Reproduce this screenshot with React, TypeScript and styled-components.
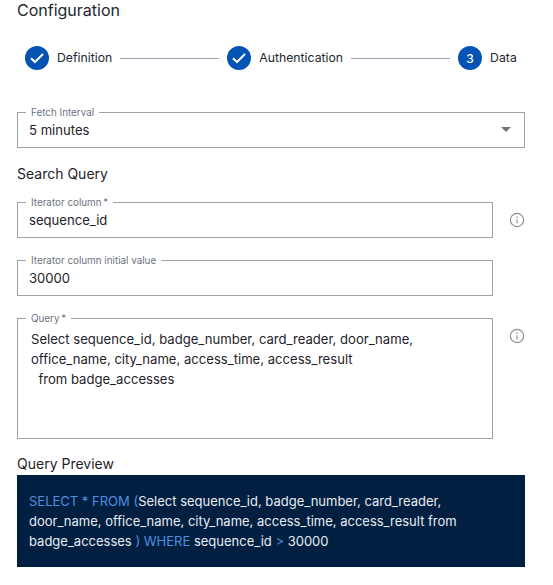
import React from "react";
import styled, { createGlobalStyle } from "styled-components";

const Global = createGlobalStyle`
  html, body { margin: 0; padding: 0; background: #fff; }
  body { font-family: Inter, "Liberation Sans", sans-serif; color: #1b1f26; }
`;

const Page = styled.div`
  width: 508px;
  height: 585px;
  padding: 0 28px 0 17px;
  overflow: hidden;
`;

const Title = styled.h1`
  margin: 0;
  height: 20px;
  font-size: 16px;
  line-height: 20px;
  font-weight: 400;
  color: #23272e;
`;

const Stepper = styled.ol`
  list-style: none;
  margin: 26px 0 0;
  padding: 0 8px;
  height: 24px;
  display: flex;
  align-items: center;
  gap: 8px;
`;

const StepCircle = styled.span`
  width: 24px;
  height: 24px;
  flex: none;
  border-radius: 50%;
  background: #0353b5;
  color: #fff;
  font-size: 12px;
  font-weight: 500;
  display: flex;
  align-items: center;
  justify-content: center;
`;

const StepLabel = styled.span`
  font-size: 12.25px;
  line-height: 24px;
  color: #23272e;
  white-space: nowrap;
`;

const StepLine = styled.span`
  flex: none;
  width: 99px;
  height: 1px;
  background: #9aa1b0;
`;

const Outlined = styled.div<{ $width: number; $height: number; $top: number }>`
  position: relative;
  box-sizing: border-box;
  width: ${(p) => p.$width}px;
  height: ${(p) => p.$height}px;
  margin-top: ${(p) => p.$top}px;
  border: 1px solid #a2a2a2;
  padding: 0 11px 1px;
  display: flex;
  align-items: center;
  justify-content: space-between;
  font-size: 13.1px;
  color: #1f2329;
`;

const FloatLabel = styled.label`
  position: absolute;
  top: -7px;
  left: 8px;
  padding: 0 5px;
  background: #fff;
  font-size: 9.85px;
  line-height: 12px;
  color: #6b7280;
  white-space: nowrap;
`;

const Caret = styled.span`
  width: 0;
  height: 0;
  border-left: 5px solid transparent;
  border-right: 5px solid transparent;
  border-top: 5px solid #757575;
  margin-right: 2px;
`;

const Heading = styled.h2<{ $top: number }>`
  margin: ${(p) => p.$top}px 0 0;
  font-size: 14px;
  line-height: 18px;
  font-weight: 400;
  color: #1f2329;
`;

const FieldRow = styled.div<{ $top: number; $start?: boolean }>`
  display: flex;
  align-items: ${(p) => (p.$start ? "flex-start" : "center")};
  margin-top: ${(p) => p.$top}px;
`;

const QueryBox = styled(Outlined)`
  display: block;
  padding: 10px 13px;
  line-height: 20px;
  font-size: 13.1px;
  white-space: pre-wrap;
`;

const InfoButton = styled.span<{ $top?: number }>`
  margin-left: 16px;
  margin-top: ${(p) => p.$top ?? 0}px;
  width: 16px;
  height: 16px;
  color: #8a8f96;
  display: flex;
`;

const Preview = styled.div`
  box-sizing: border-box;
  margin-top: 2px;
  width: 508px;
  height: 92px;
  padding: 16px 12px 0;
  background: #001f41;
  color: #e8ecf2;
  font-size: 13px;
  line-height: 20px;
`;

const Kw = styled.span`
  color: #4f8fe0;
`;

const Check = () => (
  <svg width="14" height="14" viewBox="0 0 14 14" fill="none">
    <path d="M1 7.2 5 11 13 3" stroke="#fff" strokeWidth="2" />
  </svg>
);

const Info = () => (
  <svg width="16" height="16" viewBox="0 0 16 16" fill="none" stroke="currentColor">
    <circle cx="8" cy="8" r="6.6" strokeWidth="1.2" />
    <path d="M8 7.2v4" strokeWidth="1.2" />
    <path d="M8 4.6v1.3" strokeWidth="1.2" />
  </svg>
);

export default function App() {
  return (
    <Page>
      <Global />
      <Title>Configuration</Title>
      <Stepper>
        <StepCircle><Check /></StepCircle>
        <StepLabel>Definition</StepLabel>
        <StepLine />
        <StepCircle><Check /></StepCircle>
        <StepLabel>Authentication</StepLabel>
        <StepLine />
        <StepCircle>3</StepCircle>
        <StepLabel>Data</StepLabel>
      </Stepper>
      <Outlined $width={508} $height={36} $top={42}>
        <FloatLabel>Fetch Interval</FloatLabel>
        5 minutes
        <Caret />
      </Outlined>
      <Heading $top={17}>Search Query</Heading>
      <FieldRow $top={19}>
        <Outlined $width={476} $height={36} $top={0}>
          <FloatLabel>Iterator column{"\u2009"}*</FloatLabel>
          sequence_id
        </Outlined>
        <InfoButton><Info /></InfoButton>
      </FieldRow>
      <FieldRow $top={22}>
        <Outlined $width={476} $height={36} $top={0}>
          <FloatLabel>Iterator column initial value</FloatLabel>
          30000
        </Outlined>
      </FieldRow>
      <FieldRow $top={22} $start>
        <QueryBox $width={476} $height={121} $top={0}>
          <FloatLabel>Query{"\u2009"}*</FloatLabel>
          {"Select sequence_id, badge_number, card_reader, door_name,\noffice_name, city_name, access_time, access_result\n  from badge_accesses"}
        </QueryBox>
        <InfoButton $top={10}><Info /></InfoButton>
      </FieldRow>
      <Heading $top={16}>Query Preview</Heading>
      <Preview>
        <Kw>SELECT * FROM (</Kw>Select sequence_id, badge_number, card_reader, door_name, office_name, city_name, access_time, access_result from badge_accesses <Kw>) WHERE</Kw> sequence_id <Kw>&gt;</Kw> 30000
      </Preview>
    </Page>
  );
}
